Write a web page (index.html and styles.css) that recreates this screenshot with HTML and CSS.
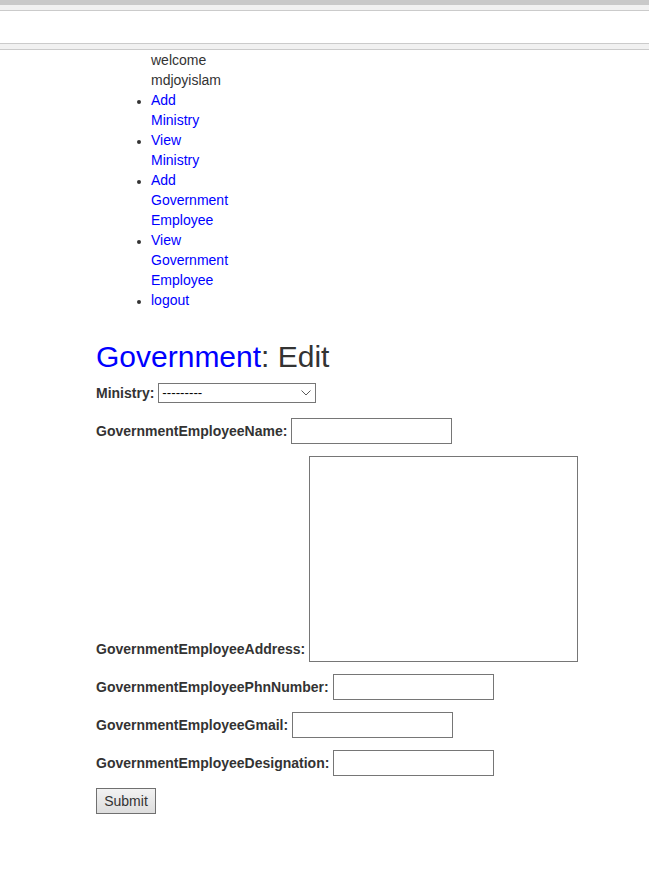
FILE: index.html
```html
<!DOCTYPE html>
<html lang="en">
<head>
<meta charset="utf-8">
<title>Government: Edit</title>
<link rel="stylesheet" href="styles.css">
</head>
<body>
<header class="topbar">
  <div class="band-dark"></div>
  <div class="band-light"></div>
  <div class="bar-white"></div>
  <div class="band-light band-bottom"></div>
</header>
<nav class="sidenav">
  <ul class="menu">
    <li class="plain">welcome mdjoyislam</li>
    <li><a href="#">Add Ministry</a></li>
    <li><a href="#">View Ministry</a></li>
    <li><a href="#">Add Government Employee</a></li>
    <li><a href="#">View Government Employee</a></li>
    <li><a href="#">logout</a></li>
  </ul>
</nav>
<main class="content">
  <h2 class="title"><a href="#">Government</a>: Edit</h2>
  <form class="edit-form">
    <div class="row row-select">
      <label for="ministry">Ministry:</label>
      <span class="select-wrap">
        <select id="ministry" class="select"><option>---------</option></select>
        <svg class="chevron" width="10" height="6" viewBox="0 0 10 6" aria-hidden="true"><path d="M0.5 0.5 L5 5 L9.5 0.5" fill="none" stroke="#5a5a5a" stroke-width="1"/></svg>
      </span>
    </div>
    <div class="row row-first">
      <label for="name">GovernmentEmployeeName:</label>
      <input id="name" class="field" type="text">
    </div>
    <div class="row row-area">
      <label for="address" class="area-label">GovernmentEmployeeAddress:</label>
      <textarea id="address" class="area"></textarea>
    </div>
    <div class="row">
      <label for="phone">GovernmentEmployeePhnNumber:</label>
      <input id="phone" class="field" type="text">
    </div>
    <div class="row">
      <label for="gmail">GovernmentEmployeeGmail:</label>
      <input id="gmail" class="field" type="text">
    </div>
    <div class="row">
      <label for="designation">GovernmentEmployeeDesignation:</label>
      <input id="designation" class="field" type="text">
    </div>
    <div class="row">
      <button type="submit" class="submit">Submit</button>
    </div>
  </form>
</main>
</body>
</html>
```
FILE: styles.css
```css
html, body {
  margin: 0;
  padding: 0;
  background: #ffffff;
}
body {
  font-family: "Liberation Sans", Arial, sans-serif;
  font-size: 14px;
  line-height: 20px;
  color: #333333;
}
a {
  color: #0000ff;
  text-decoration: none;
}

/* top bar */
.topbar {
  display: flex;
  flex-direction: column;
}
.band-dark {
  height: 5px;
  background: #c9c9c9;
}
.band-light {
  height: 5px;
  background: #f1f1f1;
  border-bottom: 1px solid #cbcbcb;
}
.bar-white {
  height: 32px;
  background: #ffffff;
  border-bottom: 1px solid #cbcbcb;
}
.band-bottom {
  height: 5px;
}

/* nav */
.menu {
  margin: 0 0 0 111px;
  padding: 0 0 0 40px;
}
.menu li {
  list-style: disc;
  width: min-content;
}
.menu li::marker {
  font-size: 12px;
}
.menu li.plain {
  list-style: none;
}

/* content */
.content {
  padding-left: 96px;
}
.title {
  margin: 30px 0 10px;
  font-size: 30px;
  line-height: 33px;
  font-weight: 400;
  color: #333333;
}
.edit-form {
  display: flex;
  flex-direction: column;
  align-items: flex-start;
}
.row {
  display: flex;
  align-items: center;
  gap: 4px;
  margin-top: 12px;
}
.row label {
  font-weight: bold;
}
.row-select {
  margin-top: 0;
}
.row-first {
  margin-top: 15px;
}
.row-area {
  align-items: flex-end;
}
.area-label {
  margin-bottom: 3px;
}
.select-wrap {
  position: relative;
  display: block;
  height: 20px;
}
.select {
  display: block;
  width: 158px;
  height: 20px;
  box-sizing: border-box;
  border: 1px solid #767676;
  border-radius: 0;
  background: #ffffff;
  -webkit-appearance: none;
  appearance: none;
  font-family: "Liberation Sans", Arial, sans-serif;
  font-size: 13.33px;
  line-height: 16px;
  color: #000000;
  padding: 0 0 0 3px;
  margin: 0;
}
.chevron {
  position: absolute;
  right: 5px;
  top: 7px;
  pointer-events: none;
}
.field {
  width: 161px;
  height: 26px;
  box-sizing: border-box;
  border: 1px solid #767676;
  border-radius: 0;
  padding: 1px 2px;
  margin: 0;
  font-family: "Liberation Sans", Arial, sans-serif;
  font-size: 13.33px;
}
.area {
  width: 269px;
  height: 206px;
  box-sizing: border-box;
  border: 1px solid #767676;
  border-radius: 0;
  margin: 0;
  padding: 2px;
  resize: none;
  font-family: "Liberation Sans", Arial, sans-serif;
  font-size: 13.33px;
}
.submit {
  width: 60px;
  height: 26px;
  box-sizing: border-box;
  border: 1px solid #707070;
  border-radius: 0;
  background: linear-gradient(#f2f2f2, #dddddd);
  font-family: "Liberation Sans", Arial, sans-serif;
  font-size: 14px;
  color: #333333;
  padding: 0;
  margin: 0;
}
```
